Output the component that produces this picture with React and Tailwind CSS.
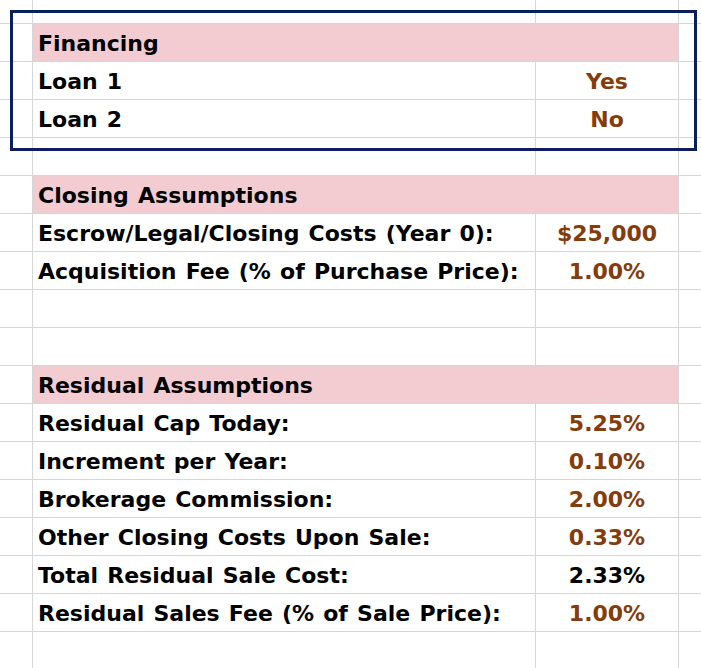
const rows = [
  { type: 'blank' },
  { type: 'head', label: 'Financing' },
  { type: 'item', label: 'Loan 1', value: 'Yes' },
  { type: 'item', label: 'Loan 2', value: 'No' },
  { type: 'blank' },
  { type: 'head', label: 'Closing Assumptions' },
  { type: 'item', label: 'Escrow/Legal/Closing Costs (Year 0):', value: '$25,000' },
  { type: 'item', label: 'Acquisition Fee (% of Purchase Price):', value: '1.00%' },
  { type: 'blank' },
  { type: 'blank' },
  { type: 'head', label: 'Residual Assumptions' },
  { type: 'item', label: 'Residual Cap Today:', value: '5.25%' },
  { type: 'item', label: 'Increment per Year:', value: '0.10%' },
  { type: 'item', label: 'Brokerage Commission:', value: '2.00%' },
  { type: 'item', label: 'Other Closing Costs Upon Sale:', value: '0.33%' },
  { type: 'item', label: 'Total Residual Sale Cost:', value: '2.33%', black: true },
  { type: 'item', label: 'Residual Sales Fee (% of Sale Price):', value: '1.00%' },
  { type: 'blank' },
];

const Row = ({ row, first }) => {
  const h = first ? 'h-[24px]' : 'h-[38px]';
  return (
    <div className={`flex ${h} border-b border-[#d6d6d6]`}>
      <div className="w-[33px] shrink-0 border-r border-[#d6d6d6]" />
      {row.type === 'head' ? (
        <div className="w-[646px] shrink-0 border-r border-[#d6d6d6] bg-[#f2ccd1] flex items-end pl-[5px] pb-[4px] text-black [word-spacing:1.5px]">
          {row.label}
        </div>
      ) : (
        <>
          <div className="w-[503px] shrink-0 border-r border-[#d6d6d6] flex items-end pl-[5px] pb-[4px] text-black whitespace-nowrap [word-spacing:1.5px]">
            {row.label}
          </div>
          <div
            className={`w-[143px] shrink-0 border-r border-[#d6d6d6] flex items-end justify-center pb-[4px] ${
              row.black ? 'text-black' : 'text-[#843c0c]'
            }`}
          >
            {row.value}
          </div>
        </>
      )}
      <div className="flex-1" />
    </div>
  );
};

export default function App() {
  return (
    <div
      className="relative w-[701px] h-[668px] overflow-hidden bg-white text-[22px] font-bold leading-[26px]"
      style={{ fontFamily: '"DejaVu Sans", Verdana, sans-serif' }}
    >
      {rows.map((row, i) => (
        <Row key={i} row={row} first={i === 0} />
      ))}

      {/* Financing outline */}
      <div className="absolute left-[10px] top-[10px] w-[687px] h-[141px] border-[3px] border-[#0a1f5c] pointer-events-none" />
    </div>
  );
}
